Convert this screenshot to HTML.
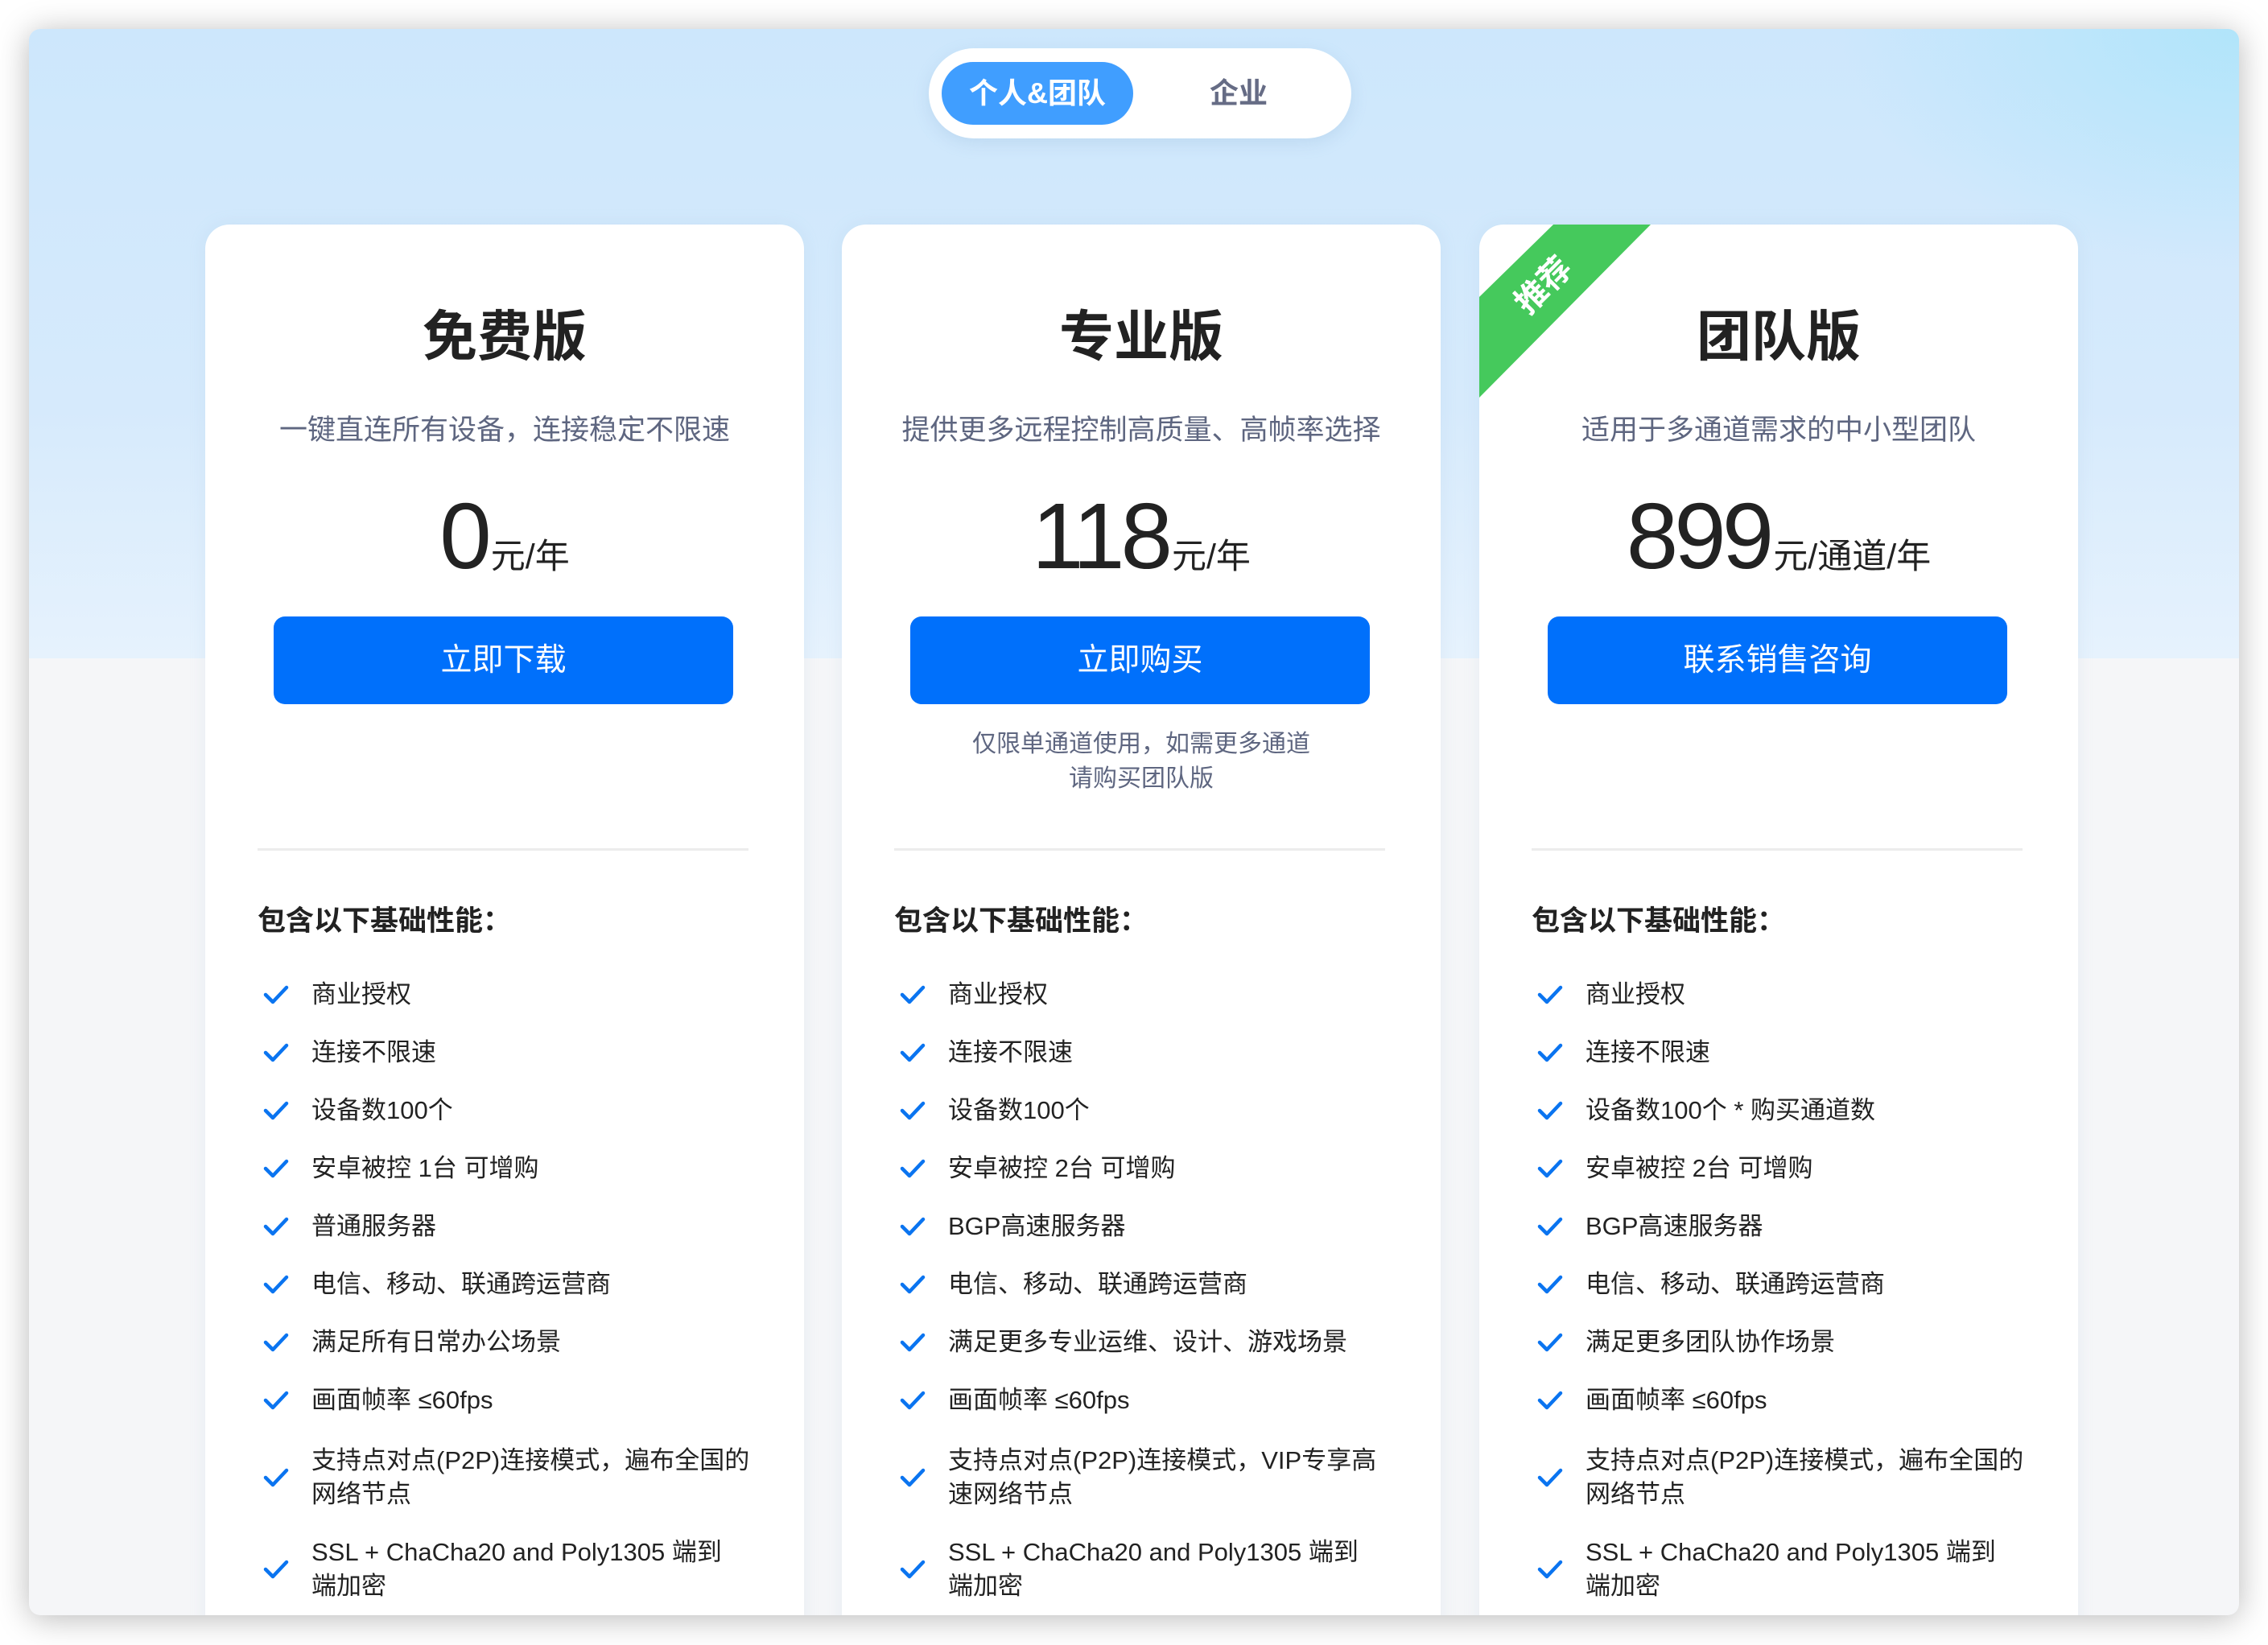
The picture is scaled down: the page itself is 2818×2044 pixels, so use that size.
<!DOCTYPE html>
<html><head><meta charset="utf-8"><style>
*{margin:0;padding:0;box-sizing:border-box}
html,body{width:2818px;height:2044px;background:#fff;overflow:hidden;font-family:"Liberation Sans","Noto Sans CJK SC",sans-serif}
.win{position:absolute;left:36px;top:36px;width:2746px;height:1971px;border-radius:14px;overflow:hidden;background:#f5f6f8;box-shadow:0 4px 40px rgba(0,0,0,.28)}
.top{position:absolute;left:0;top:0;width:100%;height:782px;background:linear-gradient(180deg,#cde7fc 0%,#d6eafc 60%,#e6f2fd 100%)}
.glow{position:absolute;right:0;top:0;width:500px;height:300px;background:radial-gradient(ellipse at 100% 0,rgba(170,228,250,.8),rgba(170,228,250,0) 70%)}
.pill{position:absolute;left:1118px;top:24px;width:525px;height:112px;border-radius:56px;background:#fff;box-shadow:0 6px 20px rgba(120,160,200,.2)}
.pa{position:absolute;left:16px;top:17px;width:238px;height:78px;border-radius:39px;background:#409eff;color:#fff;font-size:36px;font-weight:bold;text-align:center;line-height:78px}
.pb{position:absolute;left:335px;top:17px;width:100px;line-height:78px;color:#666c85;font-size:36px;font-weight:bold;text-align:center}
.card{position:absolute;top:243px;width:744px;height:1800px;background:#fff;border-radius:30px;overflow:hidden;box-shadow:0 0 20px rgba(150,180,210,.15)}
.t{position:absolute;left:0;width:100%;text-align:center}
.title{top:100px;font-size:68px;font-weight:bold;color:#222;line-height:80px}
.sub{top:233px;font-size:35px;color:#5e6680;line-height:46px}
.price{top:323px;line-height:128px;color:#222;white-space:nowrap}
.price b{font-size:116px;font-weight:normal;letter-spacing:-5px;margin-right:4px}
.price span{font-size:43px}
.btn{position:absolute;left:85px;top:487px;width:571px;height:109px;border-radius:14px;background:#0070fb;color:#fff;font-size:39px;text-align:center;line-height:109px}
.note{top:624px;font-size:30px;color:#5e6680;line-height:43px}
.div{position:absolute;left:65px;top:775px;width:610px;height:3px;background:#ececec}
.head{position:absolute;left:65px;top:844px;font-size:35px;font-weight:bold;color:#222;line-height:44px}
.it{position:absolute;left:132px;font-size:31px;color:#222;line-height:42px;width:580px}
.ck{position:absolute;left:72px;width:32px;height:26px}
.rib{position:absolute;left:0;top:0;width:220px;height:220px}
</style></head><body>
<div class="win">
<div class="top"><div class="glow"></div></div>
<div class="pill"><div class="pa">个人&amp;团队</div><div class="pb">企业</div></div>
</div>
<script>
var cards=[
{x:255,t:"免费版",s:"一键直连所有设备，连接稳定不限速",p:"0",u:"元/年",b:"立即下载",n:"",items:["商业授权","连接不限速","设备数100个","安卓被控 1台 可增购","普通服务器","电信、移动、联通跨运营商","满足所有日常办公场景","画面帧率 ≤60fps","支持点对点(P2P)连接模式，遍布全国的<br>网络节点","SSL + ChaCha20 and Poly1305 端到<br>端加密"]},
{x:1046,t:"专业版",s:"提供更多远程控制高质量、高帧率选择",p:"118",u:"元/年",b:"立即购买",n:"仅限单通道使用，如需更多通道<br>请购买团队版",items:["商业授权","连接不限速","设备数100个","安卓被控 2台 可增购","BGP高速服务器","电信、移动、联通跨运营商","满足更多专业运维、设计、游戏场景","画面帧率 ≤60fps","支持点对点(P2P)连接模式，VIP专享高<br>速网络节点","SSL + ChaCha20 and Poly1305 端到<br>端加密"]},
{x:1838,t:"团队版",s:"适用于多通道需求的中小型团队",p:"899",u:"元/通道/年",b:"联系销售咨询",n:"",r:1,items:["商业授权","连接不限速","设备数100个 * 购买通道数","安卓被控 2台 可增购","BGP高速服务器","电信、移动、联通跨运营商","满足更多团队协作场景","画面帧率 ≤60fps","支持点对点(P2P)连接模式，遍布全国的<br>网络节点","SSL + ChaCha20 and Poly1305 端到<br>端加密"]}];
var centers=[1236,1308,1380,1452,1524,1596,1668,1740,1836,1950];
var h="";
cards.forEach(function(c){
 h+='<div class="card" style="left:'+(c.x-36)+'px">';
 h+='<div class="t title">'+c.t+'</div><div class="t sub">'+c.s+'</div>';
 h+='<div class="t price"><b>'+c.p+'</b><span>'+c.u+'</span></div>';
 h+='<div class="btn">'+c.b+'</div>';
 if(c.n)h+='<div class="t note">'+c.n+'</div>';
 h+='<div class="div"></div><div class="head">包含以下基础性能：</div>';
 c.items.forEach(function(it,i){
  var cy=centers[i]-279, two=it.indexOf('<br>')>=0, hh=two?84:42;
  h+='<svg class="ck" style="top:'+(cy-13)+'px" viewBox="0 0 32 26"><path d="M3 13 L12 22 L29 4" fill="none" stroke="#0a74f0" stroke-width="4.5" stroke-linecap="round" stroke-linejoin="round"/></svg>';
  h+='<div class="it" style="top:'+(cy-hh/2)+'px">'+it+'</div>';
 });
 if(c.r)h+='<svg class="rib" viewBox="0 0 220 220"><polygon points="92,0 213,0 0,215 0,90" fill="#45c95c"/><text x="0" y="0" transform="translate(80,76) rotate(-45)" fill="#fff" font-size="40" font-weight="bold" dominant-baseline="central" font-family="Liberation Sans, Noto Sans CJK SC, sans-serif" text-anchor="middle">推荐</text></svg>';
 h+='</div>';
});
document.querySelector('.win').insertAdjacentHTML('beforeend',h);
</script>
</body></html>
